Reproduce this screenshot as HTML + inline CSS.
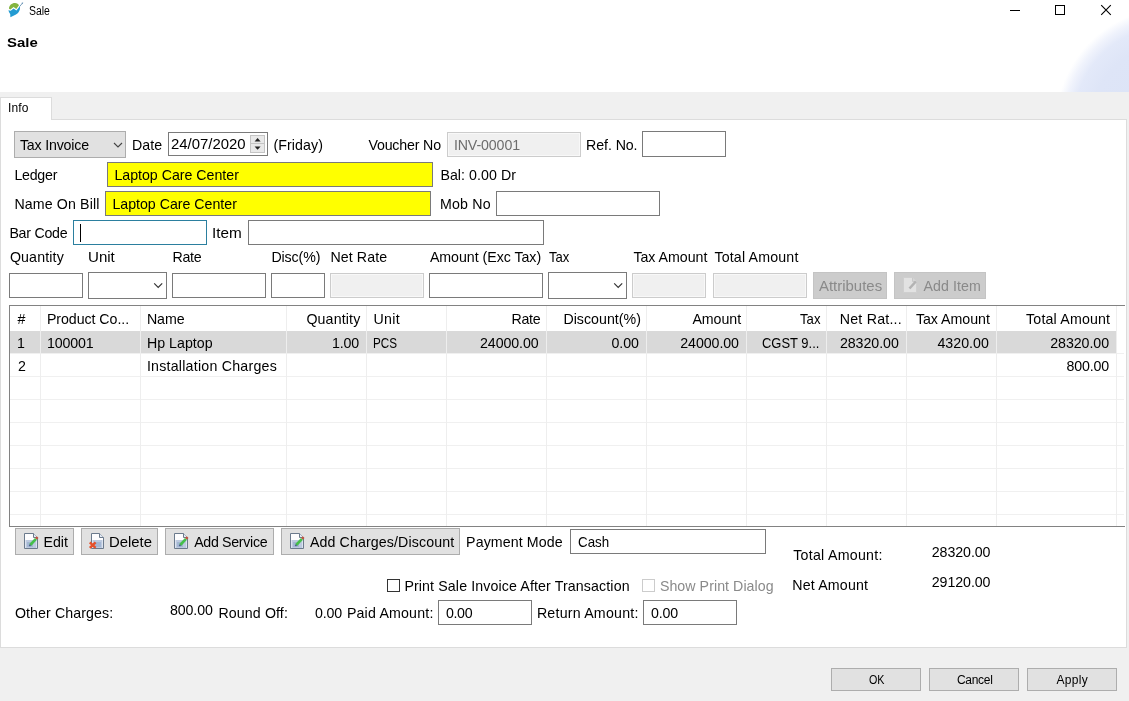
<!DOCTYPE html>
<html><head><meta charset="utf-8"><title>Sale</title>
<style>
html,body{margin:0;padding:0;}
body{width:1129px;height:701px;position:relative;overflow:hidden;background:#fff;font-family:"Liberation Sans",sans-serif;font-size:14px;color:#000;}
.a{position:absolute;white-space:nowrap;line-height:1;font-size:14.2px;transform-origin:0 50%;}
.box{position:absolute;box-sizing:border-box;border:1px solid #7a7a7a;background:#fff;}
.dis{border-color:#cccccc;background:#f0f0f0;box-shadow:inset 0 0 0 1px #f8f8f8;}
.btn{position:absolute;box-sizing:border-box;border:1px solid #adadad;background:#e1e1e1;}
.btnd{border-color:#c4c4c4;background:#cccccc;color:#8a8a8a;}
.t{font-size:14.2px;letter-spacing:0px;}
.vl{position:absolute;width:1px;background:#eeeeee;top:306px;height:220px;}
.hl{position:absolute;height:1px;background:#f0f0f0;left:10px;width:1114px;}
.r{text-align:right;}
</style></head><body>

<!-- title bar -->
<!-- gradient corner -->
<div style="position:absolute;left:1029px;top:0;width:100px;height:92px;background:radial-gradient(circle 116px at 143px 124px,#dbe3f6 0%,#dee5f7 70%,#e3e9f9 85%,#f0f3fc 93%,#fff 100%);"></div>
<!-- gray body -->
<div style="position:absolute;left:0;top:92px;width:1129px;height:609px;background:#f0f0f0;"></div>
<!-- pane -->
<div style="position:absolute;left:0px;top:119px;width:1127px;height:529px;box-sizing:border-box;background:#fff;border:1px solid #dcdcdc;"></div>
<!-- tab -->
<div style="position:absolute;left:0px;top:97px;width:52px;height:23px;box-sizing:border-box;background:#fff;border:1px solid #dcdcdc;border-bottom:none;"></div>
<!-- row 1 -->
<div class="btn" style="left:14px;top:131px;width:112px;height:27px;"></div>
<svg class="a" style="left:113px;top:142px;" width="10" height="7"><path d="M1 1 L5 5 L9 1" fill="none" stroke="#444" stroke-width="1.1"/></svg>
<div class="box" style="left:168px;top:132px;width:100px;height:24px;"></div>
<div class="box" style="left:250px;top:135px;width:15px;height:18px;border-color:#c4c4c4;background:#e9e9e9;"></div><div style="position:absolute;left:251px;top:143px;width:13px;height:1px;background:#c4c4c4;"></div>
<svg class="a" style="left:254px;top:137px;" width="8" height="14"><path d="M0.6 4.4 L3.6 1 L6.6 4.4Z M0.6 9.4 L3.6 12.8 L6.6 9.4Z" fill="#222"/></svg>
<div class="box dis" style="left:447px;top:132px;width:134px;height:25px;"></div>
<div class="box" style="left:642px;top:131px;width:84px;height:26px;"></div>
<!-- row 2 -->
<div class="box" style="left:107px;top:162px;width:326px;height:25px;background:#ffff00;"></div>
<!-- row 3 -->
<div class="box" style="left:105px;top:191px;width:326px;height:25px;background:#ffff00;"></div>
<div class="box" style="left:496px;top:191px;width:164px;height:25px;"></div>
<!-- row 4 -->
<div class="box" style="left:73px;top:220px;width:134px;height:25px;border-color:#2b7f9f;"></div>
<div style="position:absolute;left:80px;top:224px;width:1px;height:18px;background:#000;"></div>
<div class="box" style="left:248px;top:220px;width:296px;height:25px;"></div>
<!-- row 5 labels -->
<!-- row 6 inputs -->
<div class="box" style="left:9px;top:273px;width:74px;height:25px;"></div>
<div class="box" style="left:88px;top:272px;width:79px;height:27px;"></div>
<svg class="a" style="left:152px;top:282px;" width="12" height="7"><path d="M2.2 1.3 L6.2 5.3 L10.2 1.3" fill="none" stroke="#333" stroke-width="1.2"/></svg>
<div class="box" style="left:172px;top:273px;width:94px;height:25px;"></div>
<div class="box" style="left:271px;top:273px;width:54px;height:25px;"></div>
<div class="box dis" style="left:330px;top:273px;width:94px;height:25px;"></div>
<div class="box" style="left:429px;top:273px;width:114px;height:25px;"></div>
<div class="box" style="left:548px;top:272px;width:79px;height:27px;"></div>
<svg class="a" style="left:612px;top:282px;" width="12" height="7"><path d="M2.2 1.3 L6.2 5.3 L10.2 1.3" fill="none" stroke="#333" stroke-width="1.2"/></svg>
<div class="box dis" style="left:632px;top:273px;width:74px;height:25px;"></div>
<div class="box dis" style="left:713px;top:273px;width:94px;height:25px;"></div>
<div class="btn btnd" style="left:813px;top:272px;width:74px;height:27px;"></div>
<div class="btn btnd" style="left:894px;top:272px;width:92px;height:27px;"></div>
<!-- table -->
<div style="position:absolute;left:9px;top:305px;width:1116px;height:222px;box-sizing:border-box;border:1px solid #828282;border-right:none;background:#fff;"></div>
<div style="position:absolute;left:10px;top:331px;width:1107px;height:22px;background:#d9d9d9;"></div>
<div class="hl" style="top:353px;"></div>
<div class="hl" style="top:376px;"></div>
<div class="hl" style="top:399px;"></div>
<div class="hl" style="top:422px;"></div>
<div class="hl" style="top:445px;"></div>
<div class="hl" style="top:468px;"></div>
<div class="hl" style="top:491px;"></div>
<div class="hl" style="top:514px;"></div>
<div class="vl" style="left:40px;"></div>
<div class="vl" style="left:140px;"></div>
<div class="vl" style="left:286px;"></div>
<div class="vl" style="left:366px;"></div>
<div class="vl" style="left:446px;"></div>
<div class="vl" style="left:546px;"></div>
<div class="vl" style="left:646px;"></div>
<div class="vl" style="left:746px;"></div>
<div class="vl" style="left:826px;"></div>
<div class="vl" style="left:906px;"></div>
<div class="vl" style="left:996px;"></div>
<div class="vl" style="left:1116px;"></div>
<!-- bottom buttons -->
<div class="btn" style="left:15px;top:528px;width:59px;height:27px;"></div>
<div class="btn" style="left:81px;top:528px;width:77px;height:27px;"></div>
<div class="btn" style="left:165px;top:528px;width:109px;height:27px;"></div>
<div class="btn" style="left:281px;top:528px;width:179px;height:27px;"></div>
<div class="box" style="left:570px;top:529px;width:196px;height:25px;"></div>
<div class="box" style="left:387px;top:579px;width:13px;height:13px;border-color:#333;"></div>
<div class="box" style="left:642px;top:579px;width:13px;height:13px;border-color:#ccc;"></div>
<div class="box" style="left:438px;top:600px;width:94px;height:25px;"></div>
<div class="box" style="left:643px;top:600px;width:94px;height:25px;"></div>
<!-- dialog buttons -->
<div class="btn" style="left:831px;top:668px;width:90px;height:23px;"></div>
<div class="btn" style="left:929px;top:668px;width:90px;height:23px;"></div>
<div class="btn" style="left:1027px;top:668px;width:90px;height:23px;"></div>
<!-- window controls -->
<svg class="a" style="left:1000px;top:0;" width="129" height="22"><path d="M10 10.5 H20" stroke="#000" stroke-width="1"/><rect x="55.5" y="5.5" width="9" height="9" fill="none" stroke="#000" stroke-width="1"/><path d="M101.2 5.2 L110.8 14.8 M110.8 5.2 L101.2 14.8" stroke="#000" stroke-width="1.1"/></svg>


<!-- title icon -->
<svg class="a" style="left:8px;top:2px;" width="16" height="16" viewBox="8 2 16 16"><path d="M9 8.8 C8.9 5.2 12 2.9 15 3 C17 3.1 18.6 4 19 5.3 L16.3 8.9 L13.6 7.1 L10.4 9.5 Z" fill="#84b540"/><path d="M8.4 10.2 L10.7 10.7 L13.6 8.5 L16.4 10.4 L19.9 6.3 C20.5 9.6 19 13 15.5 14.8 L10.4 17.3 L10.2 13.9 C9.3 12.9 8.7 11.6 8.4 10.2 Z" fill="#239bd2"/><path d="M19.6 6.6 L22.6 3" stroke="#6f97b8" stroke-width="0.9" fill="none"/><path d="M21.3 2.9 L23.2 2.2 L22.9 4.3 Z" fill="#6f97b8"/></svg>
<!-- button icons -->
<svg class="a" style="left:23px;top:532px;" width="17" height="18"><path d="M1.5 1.5 H10.5 L14.5 5.5 V16.5 H1.5 Z" fill="#fdfdfe" stroke="#6b7a8c"/><rect x="2.5" y="8" width="11" height="8" fill="#bccadf"/><rect x="4" y="10" width="6" height="5" fill="#a3b6d3"/><path d="M10.5 1.5 V5.5 H14.5" fill="#e4ebf5" stroke="#6b7a8c"/><path d="M7.2 13 L13 6.8" stroke="#45c04a" stroke-width="2.7"/><path d="M6.4 14 L7.4 12.8" stroke="#4a5a8a" stroke-width="1.6"/><path d="M13 6.8 L14.6 5.1" stroke="#c4523c" stroke-width="2.4"/></svg>
<svg class="a" style="left:88px;top:532px;" width="18" height="18"><path d="M3.5 1.5 H11.5 L15.5 5.5 V16.5 H3.5 Z" fill="#fdfdfe" stroke="#6b7a8c"/><rect x="4.5" y="8" width="10" height="8" fill="#bccadf"/><rect x="7" y="10" width="6" height="5" fill="#a3b6d3"/><path d="M11.5 1.5 V5.5 H15.5" fill="#e4ebf5" stroke="#6b7a8c"/><path d="M1.8 10.3 L7.6 15.8 M7.6 10.3 L1.8 15.8" stroke="#e5502b" stroke-width="2.4"/></svg>
<svg class="a" style="left:173px;top:532px;" width="17" height="18"><path d="M1.5 1.5 H10.5 L14.5 5.5 V16.5 H1.5 Z" fill="#fdfdfe" stroke="#6b7a8c"/><rect x="2.5" y="8" width="11" height="8" fill="#bccadf"/><rect x="4" y="10" width="6" height="5" fill="#a3b6d3"/><path d="M10.5 1.5 V5.5 H14.5" fill="#e4ebf5" stroke="#6b7a8c"/><path d="M7.2 13 L13 6.8" stroke="#45c04a" stroke-width="2.7"/><path d="M6.4 14 L7.4 12.8" stroke="#4a5a8a" stroke-width="1.6"/><path d="M13 6.8 L14.6 5.1" stroke="#c4523c" stroke-width="2.4"/></svg>
<svg class="a" style="left:289px;top:532px;" width="17" height="18"><path d="M1.5 1.5 H10.5 L14.5 5.5 V16.5 H1.5 Z" fill="#fdfdfe" stroke="#6b7a8c"/><rect x="2.5" y="8" width="11" height="8" fill="#bccadf"/><rect x="4" y="10" width="6" height="5" fill="#a3b6d3"/><path d="M10.5 1.5 V5.5 H14.5" fill="#e4ebf5" stroke="#6b7a8c"/><path d="M7.2 13 L13 6.8" stroke="#45c04a" stroke-width="2.7"/><path d="M6.4 14 L7.4 12.8" stroke="#4a5a8a" stroke-width="1.6"/><path d="M13 6.8 L14.6 5.1" stroke="#c4523c" stroke-width="2.4"/></svg>
<svg class="a" style="left:903px;top:277px;" width="16" height="17"><path d="M0.5 0.5 H9.5 L13.5 4.5 V15.5 H0.5 Z" fill="#e2e2e2" stroke="#cfcfcf"/><path d="M9.5 0.5 V4.5 H13.5" fill="#d6d6d6" stroke="#c8c8c8"/><path d="M6.5 11.5 L12.8 4.5" stroke="#b3b3b3" stroke-width="2.6"/></svg>

<!-- texts -->
<div style="position:absolute;left:0;top:0;width:1129px;height:701px;will-change:transform;">
<div class="a" style="left:29.00px;top:4.84px;font-size:12px;transform:scaleX(0.8709);">Sale</div>
<div class="a" style="left:8.00px;top:101.84px;font-size:12px;letter-spacing:0.119px;">Info</div>
<div class="a" style="left:7.20px;top:35.66px;font-size:13.4px;transform:scaleX(1.1144);font-weight:bold;">Sale</div>
<div class="a" style="left:19.90px;top:137.98px;letter-spacing:-0.178px;">Tax Invoice</div>
<div class="a" style="left:131.90px;top:137.98px;letter-spacing:0.074px;">Date</div>
<div class="a" style="left:171.00px;top:136.98px;transform:scaleX(1.0504);">24/07/2020</div>
<div class="a" style="left:273.40px;top:137.98px;letter-spacing:0.094px;">(Friday)</div>
<div class="a" style="left:368.40px;top:137.98px;letter-spacing:-0.161px;">Voucher No</div>
<div class="a" style="left:453.90px;top:137.98px;letter-spacing:-0.107px;color:#6d6d6d;">INV-00001</div>
<div class="a" style="left:586.10px;top:137.98px;letter-spacing:-0.085px;">Ref. No.</div>
<div class="a" style="left:14.40px;top:167.98px;letter-spacing:-0.230px;">Ledger</div>
<div class="a" style="left:114.40px;top:167.98px;letter-spacing:-0.005px;">Laptop Care Center</div>
<div class="a" style="left:440.40px;top:167.98px;letter-spacing:0.056px;">Bal: 0.00 Dr</div>
<div class="a" style="left:14.40px;top:196.98px;letter-spacing:0.125px;">Name On Bill</div>
<div class="a" style="left:112.40px;top:196.98px;letter-spacing:-0.005px;">Laptop Care Center</div>
<div class="a" style="left:439.90px;top:196.98px;letter-spacing:0.203px;">Mob No</div>
<div class="a" style="left:9.40px;top:225.98px;letter-spacing:-0.249px;">Bar Code</div>
<div class="a" style="left:211.82px;top:225.98px;transform:scaleX(1.0786);">Item</div>
<div class="a" style="left:9.90px;top:249.98px;letter-spacing:0.151px;">Quantity</div>
<div class="a" style="left:88.34px;top:249.98px;transform:scaleX(1.0622);">Unit</div>
<div class="a" style="left:172.40px;top:249.98px;letter-spacing:-0.259px;">Rate</div>
<div class="a" style="left:271.40px;top:249.98px;letter-spacing:-0.104px;">Disc(%)</div>
<div class="a" style="left:330.40px;top:249.98px;letter-spacing:0.100px;">Net Rate</div>
<div class="a" style="left:429.90px;top:249.98px;letter-spacing:-0.029px;">Amount (Exc Tax)</div>
<div class="a" style="left:549.40px;top:249.98px;transform:scaleX(0.9235);">Tax</div>
<div class="a" style="left:633.40px;top:249.98px;letter-spacing:-0.019px;">Tax Amount</div>
<div class="a" style="left:714.40px;top:249.98px;letter-spacing:0.176px;">Total Amount</div>
<div class="a" style="left:818.80px;top:278.98px;transform:scaleX(1.0529);color:#8a8a8a;">Attributes</div>
<div class="a" style="left:923.40px;top:278.98px;letter-spacing:0.077px;color:#8a8a8a;">Add Item</div>
<div class="a" style="left:17.40px;top:311.98px;">#</div>
<div class="a" style="left:46.90px;top:311.98px;letter-spacing:-0.046px;">Product Co...</div>
<div class="a" style="left:146.90px;top:311.98px;letter-spacing:-0.051px;">Name</div>
<div class="a" style="left:306.40px;top:311.98px;letter-spacing:0.151px;">Quantity</div>
<div class="a" style="left:373.40px;top:311.98px;letter-spacing:0.337px;">Unit</div>
<div class="a" style="left:511.40px;top:311.98px;letter-spacing:-0.259px;">Rate</div>
<div class="a" style="left:563.40px;top:311.98px;letter-spacing:0.026px;">Discount(%)</div>
<div class="a" style="left:692.40px;top:311.98px;letter-spacing:-0.030px;">Amount</div>
<div class="a" style="left:800.40px;top:311.98px;transform:scaleX(0.9280);">Tax</div>
<div class="a" style="left:839.80px;top:311.98px;letter-spacing:0.213px;">Net Rat...</div>
<div class="a" style="left:915.90px;top:311.98px;letter-spacing:-0.008px;">Tax Amount</div>
<div class="a" style="left:1026.10px;top:311.98px;letter-spacing:0.176px;">Total Amount</div>
<div class="a" style="left:17.10px;top:335.98px;">1</div>
<div class="a" style="left:46.90px;top:335.98px;letter-spacing:-0.130px;">100001</div>
<div class="a" style="left:146.90px;top:335.98px;letter-spacing:0.027px;">Hp Laptop</div>
<div class="a" style="left:331.90px;top:335.98px;letter-spacing:-0.141px;">1.00</div>
<div class="a" style="left:373.38px;top:335.98px;transform:scaleX(0.8228);">PCS</div>
<div class="a" style="left:480.00px;top:335.98px;letter-spacing:-0.069px;">24000.00</div>
<div class="a" style="left:611.60px;top:335.98px;letter-spacing:-0.141px;">0.00</div>
<div class="a" style="left:680.30px;top:335.98px;letter-spacing:-0.069px;">24000.00</div>
<div class="a" style="left:761.90px;top:335.98px;transform:scaleX(0.9127);">CGST 9...</div>
<div class="a" style="left:839.90px;top:335.98px;letter-spacing:-0.041px;">28320.00</div>
<div class="a" style="left:937.40px;top:335.98px;letter-spacing:0.034px;">4320.00</div>
<div class="a" style="left:1050.20px;top:335.98px;letter-spacing:-0.041px;">28320.00</div>
<div class="a" style="left:18.10px;top:358.98px;">2</div>
<div class="a" style="left:146.90px;top:358.98px;letter-spacing:0.237px;">Installation Charges</div>
<div class="a" style="left:1066.40px;top:358.98px;letter-spacing:-0.141px;">800.00</div>
<div class="a" style="left:43.50px;top:534.98px;">Edit</div>
<div class="a" style="left:108.85px;top:534.98px;transform:scaleX(1.0481);">Delete</div>
<div class="a" style="left:194.15px;top:534.98px;letter-spacing:-0.305px;">Add Service</div>
<div class="a" style="left:309.90px;top:534.98px;letter-spacing:0.121px;">Add Charges/Discount</div>
<div class="a" style="left:466.10px;top:534.98px;letter-spacing:0.097px;">Payment Mode</div>
<div class="a" style="left:577.90px;top:534.98px;transform:scaleX(0.9401);">Cash</div>
<div class="a" style="left:793.20px;top:547.98px;letter-spacing:0.266px;">Total Amount:</div>
<div class="a" style="left:931.80px;top:544.98px;letter-spacing:-0.069px;">28320.00</div>
<div class="a" style="left:792.20px;top:577.98px;letter-spacing:0.192px;">Net Amount</div>
<div class="a" style="left:931.80px;top:574.98px;letter-spacing:-0.069px;">29120.00</div>
<div class="a" style="left:404.40px;top:578.98px;letter-spacing:0.124px;">Print Sale Invoice After Transaction</div>
<div class="a" style="left:659.90px;top:578.98px;letter-spacing:0.058px;color:#8a8a8a;">Show Print Dialog</div>
<div class="a" style="left:14.90px;top:605.98px;letter-spacing:0.096px;">Other Charges:</div>
<div class="a" style="left:170.00px;top:602.98px;letter-spacing:-0.101px;">800.00</div>
<div class="a" style="left:218.40px;top:605.98px;letter-spacing:0.126px;">Round Off:</div>
<div class="a" style="left:314.90px;top:605.98px;letter-spacing:-0.141px;">0.00</div>
<div class="a" style="left:346.90px;top:605.98px;letter-spacing:0.188px;">Paid Amount:</div>
<div class="a" style="left:445.90px;top:605.98px;letter-spacing:-0.308px;">0.00</div>
<div class="a" style="left:536.90px;top:605.98px;letter-spacing:0.222px;">Return Amount:</div>
<div class="a" style="left:650.90px;top:605.98px;letter-spacing:-0.141px;">0.00</div>
<div class="a" style="left:868.70px;top:673.84px;font-size:12px;transform:scaleX(0.8942);">OK</div>
<div class="a" style="left:956.90px;top:673.84px;font-size:12px;letter-spacing:-0.277px;">Cancel</div>
<div class="a" style="left:1056.40px;top:673.84px;font-size:12px;letter-spacing:0.321px;">Apply</div>
</div>
</body></html>
